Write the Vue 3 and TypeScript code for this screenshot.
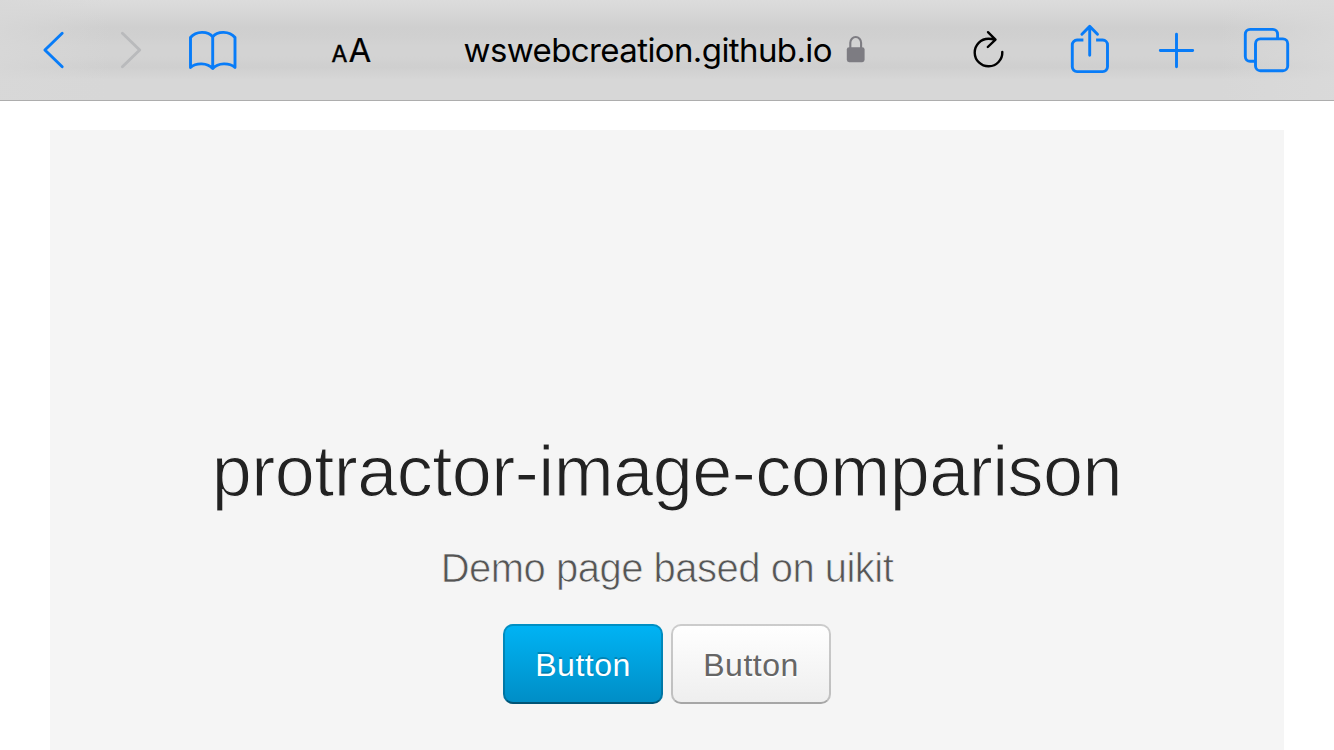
<script setup lang="ts">
interface DemoButton {
  label: string
  variant: 'primary' | 'default'
}

const host = 'wswebcreation.github.io'
const title = 'protractor-image-comparison'
const subtitle = 'Demo page based on uikit'
const buttons: DemoButton[] = [
  { label: 'Button', variant: 'primary' },
  { label: 'Button', variant: 'default' },
]
</script>

<template>
  <div class="screen">
    <header class="toolbar">
      <svg class="icon" viewBox="0 0 90 100"><path d="M62.2 33.2 44.9 50l17.3 16.8" /></svg>
      <svg class="icon disabled" viewBox="90 0 70 100"><path d="M122.4 33.2 139.7 50l-17.3 16.8" /></svg>
      <svg class="icon" viewBox="160 0 100 100">
        <path d="M190.5 67.5V37.5C196 30.8 208 30.8 212.7 36.8C217.4 30.8 229.5 30.8 235 37.5V67.5C229.5 62.5 218 62.5 212.7 68.5C207.5 62.5 196 62.5 190.5 67.5ZM212.7 36.8V68" />
      </svg>
      <div class="reader"><span class="small-a">A</span><span class="large-a">A</span></div>
      <div class="address">
        <span class="host">{{ host }}</span>
        <svg class="lock" viewBox="846 34 20 30">
          <rect x="846.8" y="47.2" width="17.8" height="15" rx="2.4" fill="#7d7c82" />
          <path d="M850.3 48v-5.2a5.4 5.8 0 0 1 10.8 0V48" fill="none" stroke="#7d7c82" stroke-width="2.1" />
        </svg>
      </div>
      <svg class="icon reload" viewBox="940 0 100 100">
        <path d="M1002.3 52A13.8 13.8 0 1 1 988.5 38.7Q992 38.7 995 39.6M988 32.2l7.5 7.4-7.7 7.4" />
      </svg>
      <svg class="icon" viewBox="1040 0 95 100">
        <path d="M1083.4 40h-6.3a4.8 4.8 0 0 0-4.8 4.8v22a4.8 4.8 0 0 0 4.8 4.8h25.6a4.8 4.8 0 0 0 4.8-4.8v-22a4.8 4.8 0 0 0-4.8-4.8h-6.6" stroke-linecap="butt" />
        <path d="M1089.7 55.3V26.7M1081.9 34.2l7.8-7.8 7.8 7.8" />
      </svg>
      <svg class="icon" viewBox="1135 0 85 100"><path d="M1160.3 50.5h32.4M1176.5 34.3v32.4" /></svg>
      <svg class="icon" viewBox="1220 0 114 100">
        <rect x="1255.5" y="38.9" width="32.2" height="31.8" rx="4.8" />
        <path d="M1277.6 38.5v-4.3a4.8 4.8 0 0 0-4.8-4.8h-22.7a4.8 4.8 0 0 0-4.8 4.8v22.3a4.8 4.8 0 0 0 4.8 4.8h5" stroke-linecap="butt" />
      </svg>
    </header>
    <main class="hero">
      <h1>{{ title }}</h1>
      <p>{{ subtitle }}</p>
      <div class="actions">
        <button v-for="b in buttons" :key="b.variant" type="button" :class="['btn', b.variant]">{{ b.label }}</button>
      </div>
    </main>
  </div>
</template>

<style>
body {
  margin: 0;
  overflow: hidden;
}
</style>

<style scoped>
.screen {
  width: 1334px;
  height: 750px;
  display: flex;
  flex-direction: column;
  overflow: hidden;
  background: #fff;
  font-family: "Liberation Sans", Arial, sans-serif;
}
.toolbar {
  box-sizing: border-box;
  flex: none;
  height: 101px;
  display: grid;
  grid-template-columns: 90px 70px 100px 180px 500px 100px 95px 85px 114px;
  border-bottom: 1px solid #adadad;
  background:
    linear-gradient(90deg, rgba(216, 216, 216, 0.8), transparent 110px, transparent 1220px, rgba(218, 218, 218, 0.8)),
    linear-gradient(#dcdcdc 0, #d7d7d7 12px, #cfcfcf 27px, #d0d0d0 36px, #d3d3d3 46px, #d3d3d3 56px, #cfcfcf 67px, #d7d7d7 80px, #d7d7d7 100%);
}
.icon {
  display: block;
  width: 100%;
  height: 100px;
  fill: none;
  stroke: #087cf8;
  stroke-width: 2.9;
  stroke-linecap: round;
  stroke-linejoin: round;
}
.disabled {
  stroke: #b9babc;
}
.reload {
  stroke: #000;
  stroke-width: 2.4;
}
.reader,
.address {
  display: flex;
  align-items: baseline;
  font-family: Inter, sans-serif;
  line-height: 100px;
  height: 100px;
  white-space: nowrap;
  color: #000;
}
.reader {
  padding-left: 71.5px;
  gap: 1px;
}
.small-a {
  font-size: 23px;
  -webkit-text-stroke: 0.5px #000;
}
.large-a {
  font-size: 33px;
  line-height: 100px;
  -webkit-text-stroke: 0.2px #000;
}
.address {
  padding-left: 23.5px;
}
.host {
  font-size: 33px;
  letter-spacing: -0.6px;
}
.lock {
  width: 20px;
  height: 30px;
  align-self: flex-start;
  margin: 34px 0 0 14px;
}
.hero {
  flex: 1;
  margin: 29px 50px 0;
  background: #f5f5f5;
  text-align: center;
  padding-top: 299px;
}
h1,
p {
  margin: 0;
  font-weight: 400;
  white-space: nowrap;
}
h1 {
  font-size: 72px;
  line-height: 84px;
  letter-spacing: -0.52px;
  color: #222;
  -webkit-text-stroke: 1.2px #f5f5f5;
}
p {
  margin-top: 30px;
  font-size: 40px;
  line-height: 50px;
  letter-spacing: -0.5px;
  color: #555;
  -webkit-text-stroke: 0.7px #f5f5f5;
}
.actions {
  display: flex;
  justify-content: center;
  gap: 8px;
  margin-top: 31px;
}
.btn {
  box-sizing: border-box;
  width: 160px;
  height: 80px;
  padding: 2px 0 0;
  border: 2px solid rgba(0, 0, 0, 0.2);
  border-bottom-color: rgba(0, 0, 0, 0.3);
  border-radius: 10px;
  background-origin: border-box;
  font: 32px/74px "Liberation Sans", Arial, sans-serif;
  letter-spacing: 0.5px;
}
.primary {
  color: #fff;
  border-bottom-color: rgba(0, 0, 0, 0.4);
  background-image: linear-gradient(#00b4f5, #008dc5);
  text-shadow: 0 -2px 0 rgba(0, 0, 0, 0.2);
}
.default {
  color: #666;
  background-color: #fff;
  background-image: linear-gradient(#fff, #eee);
  text-shadow: 0 2px 0 #fff;
}
</style>
